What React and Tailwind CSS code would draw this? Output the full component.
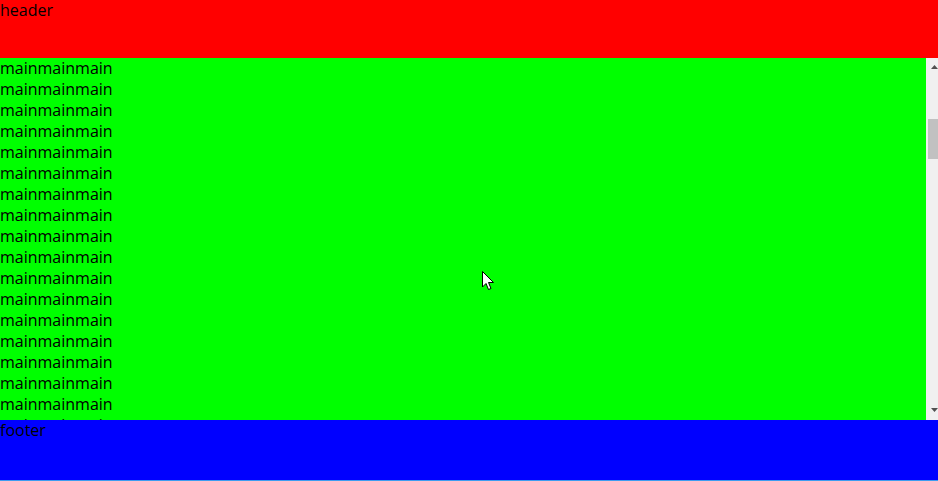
import { useEffect, useRef } from 'react';

const lines = Array.from({ length: 145 }, (_, i) => i);

function FakeScrollbar() {
  return (
    <div className="w-3 shrink-0 bg-[#f0f0f0] flex flex-col overflow-hidden">
      <div className="h-[17px] shrink-0 pl-[5px] pt-[7px]">
        <svg width="7" height="4" viewBox="0 0 7 4" className="block">
          <path d="M3.5 0 L7 4 L0 4 Z" fill="#505050" />
        </svg>
      </div>
      <div className="flex-1 pt-[44px]">
        <div className="h-10 ml-[2px] bg-[#c1c1c1]" />
      </div>
      <div className="h-[17px] shrink-0 pl-[5px] pt-[5px]">
        <svg width="7" height="4" viewBox="0 0 7 4" className="block">
          <path d="M0 0 L7 0 L3.5 4 Z" fill="#505050" />
        </svg>
      </div>
    </div>
  );
}

export default function App() {
  const mainRef = useRef(null);

  useEffect(() => {
    if (mainRef.current) mainRef.current.scrollTop = 441;
  }, []);

  return (
    <div className="relative h-[481px] w-[938px] overflow-hidden flex flex-col font-['Open_Sans',sans-serif] text-[16px] leading-[21px] text-black">
      <header className="h-[58px] shrink-0 bg-[#ff0000]">header</header>
      <div className="h-[362px] shrink-0 flex bg-[#00ff00]">
        <main
          ref={mainRef}
          className="flex-1 overflow-y-auto [scrollbar-width:none] [&::-webkit-scrollbar]:hidden"
        >
          {lines.map((i) => (
            <div key={i}>mainmainmain</div>
          ))}
        </main>
        <FakeScrollbar />
      </div>
      <footer className="h-[60px] shrink-0 bg-[#0000ff]">footer</footer>
      <div className="h-px shrink-0 bg-[#3c9cf0]" />
      <svg
        width="13"
        height="20"
        viewBox="0 0 13 20"
        className="absolute left-[482px] top-[271px] pointer-events-none"
      >
        <path
          d="M0.5 0.5 L0.5 16 L4 12.5 L6.5 18.5 L9 17.5 L6.5 11.5 L11.5 11.5 Z"
          fill="#fff"
          stroke="#000"
          strokeWidth="1"
          strokeLinejoin="round"
        />
      </svg>
    </div>
  );
}
